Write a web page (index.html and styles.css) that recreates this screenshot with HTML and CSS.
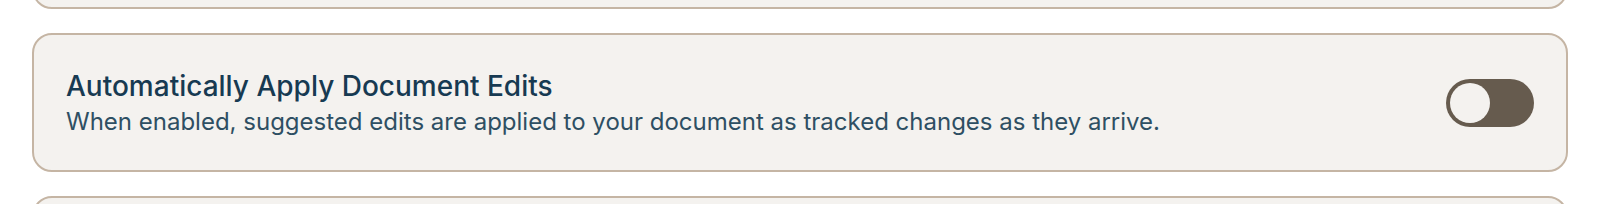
FILE: index.html
```html
<!DOCTYPE html>
<html lang="en">
<head>
    <meta charset="UTF-8">
    <meta name="viewport" content="width=device-width, initial-scale=1.0">
    <title>Settings</title>
    <link rel="stylesheet" href="styles.css">
</head>
<body>
    <div class="settings-list">
        <!-- Previous setting (scrolled out of view) -->
        <div class="setting-card"></div>

        <!-- Auto apply edits -->
        <div class="setting-card">
            <div class="setting-text">
                <h2>Automatically Apply Document Edits</h2>
                <p>When enabled, suggested edits are applied to your document as tracked changes as they arrive.</p>
            </div>
            <label class="toggle">
                <input type="checkbox" id="auto-apply">
                <span class="toggle-track"><span class="toggle-knob"></span></span>
            </label>
        </div>

        <!-- Next setting (below the fold) -->
        <div class="setting-card"></div>
    </div>
</body>
</html>
```

FILE: styles.css
```css
body {
    font-family: Inter, "Noto Sans", sans-serif;
    background-color: #ffffff;
    margin: 0;
    padding: 0 32px;
    overflow: hidden;
}

.settings-list {
    display: flex;
    flex-direction: column;
    gap: 24px;
    margin-top: -130px; /* page is scrolled down */
}

.setting-card {
    display: flex;
    align-items: center;
    justify-content: space-between;
    gap: 32px;
    min-height: 139px;
    box-sizing: border-box;
    padding: 32px;
    background-color: #f4f2ef;
    border: 2px solid #c5b5a4;
    border-radius: 20px;
}

.setting-text h2 {
    margin: 0;
    font-size: 28px;
    font-weight: 500;
    line-height: 38px;
    color: #173a52;
}

.setting-text p {
    margin: 0;
    font-size: 24px;
    line-height: 33px;
    color: #2e4f63;
}

.toggle {
    flex-shrink: 0;
    cursor: pointer;
}

.toggle input {
    display: none;
}

.toggle-track {
    display: flex;
    align-items: center;
    width: 88px;
    height: 48px;
    padding: 0 4px;
    box-sizing: border-box;
    border-radius: 24px;
    background-color: #665b4e;
}

.toggle-knob {
    width: 40px;
    height: 40px;
    border-radius: 50%;
    background-color: #f4f2ef;
}

.toggle input:checked + .toggle-track {
    justify-content: flex-end;
}
```
